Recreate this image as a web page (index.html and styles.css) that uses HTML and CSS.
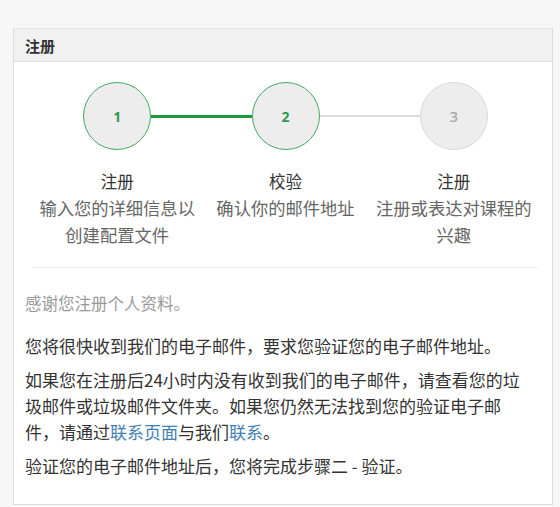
FILE: index.html
```html
<!DOCTYPE html>
<html lang="zh-CN">
<head>
<meta charset="utf-8">
<title>注册</title>
<link rel="stylesheet" href="styles.css">
</head>
<body>
<div class="page">
  <section class="panel">
    <header class="panel-head">注册</header>
    <div class="panel-body">
      <div class="steps">
        <div class="step">
          <div class="track">
            <span class="bar bar-none"></span>
            <span class="circle done">1</span>
            <span class="bar bar-green"></span>
          </div>
          <div class="step-title">注册</div>
          <div class="step-desc">输入您的详细信息以创建配置文件</div>
        </div>
        <div class="step">
          <div class="track">
            <span class="bar bar-green"></span>
            <span class="circle done">2</span>
            <span class="bar bar-grey"></span>
          </div>
          <div class="step-title">校验</div>
          <div class="step-desc">确认你的邮件地址</div>
        </div>
        <div class="step">
          <div class="track">
            <span class="bar bar-grey"></span>
            <span class="circle todo">3</span>
            <span class="bar bar-none"></span>
          </div>
          <div class="step-title">注册</div>
          <div class="step-desc">注册或表达对课程的兴趣</div>
        </div>
      </div>
      <hr class="divider">
      <div class="content">
        <p class="thanks">感谢您注册个人资料。</p>
        <p class="para">您将很快收到我们的电子邮件，要求您验证您的电子邮件地址。</p>
        <p class="para">如果您在注册后24小时内没有收到我们的电子邮件，请查看您的垃圾邮件或垃圾邮件文件夹。如果您仍然无法找到您的验证电子邮件，请通过<a class="link" href="#">联系页面</a>与我们<a class="link" href="#">联系</a>。</p>
        <p class="para">验证您的电子邮件地址后，您将完成步骤二 - 验证。</p>
      </div>
    </div>
  </section>
</div>
</body>
</html>
```

FILE: styles.css
```css
* { box-sizing: border-box; }

html, body {
  margin: 0;
  padding: 0;
  background: #f7f7f7;
}

body {
  font-family: "Noto Sans CJK SC", "Microsoft YaHei", "Noto Sans", sans-serif;
  color: #333;
}

.page {
  padding: 28px 0 0 13px;
}

.panel {
  width: 540px;
  background: #fff;
  border: 1px solid #dcdcdc;
  border-top-color: #e4e4e4;
}

.panel-head {
  height: 33px;
  line-height: 33px;
  padding-left: 11px;
  background: #f1f1f1;
  border-bottom: 1px solid #dedede;
  font-size: 15px;
  font-weight: bold;
  color: #333;
}

.panel-body {
  padding: 20px 0 25px 0;
}

.steps {
  display: grid;
  grid-template-columns: repeat(3, 1fr);
  padding: 0 14px 0 19px;
}

.step {
  display: flex;
  flex-direction: column;
  align-items: center;
  text-align: center;
}

.track {
  display: flex;
  align-items: center;
  width: 100%;
}

.bar {
  flex: 1;
  height: 2px;
}

.bar-green { background: #1e9a3c; height: 3px; }
.bar-grey { background: #dcdcdc; }
.bar-none { background: transparent; }

.circle {
  width: 68px;
  height: 68px;
  border-radius: 50%;
  display: flex;
  align-items: center;
  justify-content: center;
  background: #ededed;
  font-family: "Open Sans", "Liberation Sans", sans-serif;
  font-size: 14px;
  font-weight: bold;
}

.circle.done {
  border: 1.5px solid #45a862;
  color: #2f9a4f;
}

.circle.todo {
  border: 1px solid #dadada;
  color: #aaaaaa;
  font-weight: 600;
  font-size: 15px;
}

.step-title {
  margin-top: 18px;
  line-height: 26px;
  font-size: 16.5px;
  color: #333;
}

.step-desc {
  line-height: 27px;
  font-size: 17.3px;
  color: #666;
  padding: 0 2px;
}

.divider {
  margin: 19px 14px 0 18px;
  border: 0;
  border-top: 1px solid #ececec;
  height: 0;
}

.content {
  padding: 0 11px;
}

.thanks {
  margin: 22px 0 0 0;
  line-height: 26px;
  font-size: 16.5px;
  color: #9a9a9a;
}

.para {
  margin: 17px 0 0 0;
  max-width: 502px;
  line-height: 26px;
  font-size: 17px;
  color: #333;
}

.thanks + .para { margin-top: 17px; }
.para + .para { margin-top: 8px; }

.link {
  color: #3f7fb5;
  text-decoration: none;
}
```
